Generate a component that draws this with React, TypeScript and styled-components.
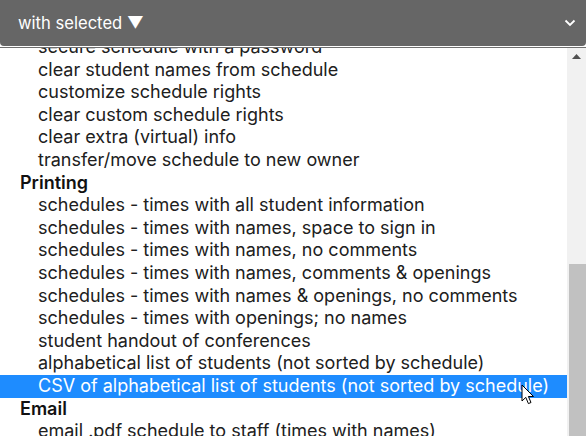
import React from "react";
import styled, { createGlobalStyle } from "styled-components";

const Global = createGlobalStyle`
  html, body { margin: 0; padding: 0; background: #ffffff; }
  body { font-family: Inter, "Noto Sans", sans-serif; overflow: hidden; }
  #root { width: 586px; height: 436px; overflow: hidden; }
`;

const Page = styled.div`
  width: 586px;
  height: 436px;
  display: flex;
  flex-direction: column;
  background: #fff;
  position: relative;
  overflow: hidden;
`;

const SelectBar = styled.div`
  height: 46px;
  flex: none;
  background: #666666;
  border-radius: 0 0 4px 4px;
  display: flex;
  align-items: center;
  justify-content: space-between;
  padding: 0 10px 0 18px;
  color: #ffffff;
  font-size: 16.6px;
  box-sizing: border-box;
`;

const BarLabel = styled.span`
  letter-spacing: 0;
`;

const Listbox = styled.div`
  margin-top: 1px;
  flex: 1;
  min-height: 0;
  border-top: 1px solid #6e6e6e;
  display: flex;
  overflow: hidden;
`;

const Options = styled.div`
  flex: 1;
  min-width: 0;
  overflow: hidden;
`;

const Scroller = styled.div`
  margin-top: -12px;
  display: flex;
  flex-direction: column;
`;

const Row = styled.div<{ $group?: boolean; $selected?: boolean }>`
  height: 22.6px;
  line-height: 22.6px;
  flex: none;
  font-size: 18px;
  white-space: nowrap;
  padding-left: ${(p) => (p.$group ? "20px" : "38px")};
  font-weight: ${(p) => (p.$group ? 600 : 400)};
  color: ${(p) => (p.$selected ? "#ffffff" : p.$group ? "#111111" : "#202020")};
  background: ${(p) => (p.$selected ? "#1e8cff" : "transparent")};
`;

const Scrollbar = styled.div`
  width: 19px;
  flex: none;
  background: #f1f1f1;
  display: flex;
  flex-direction: column;
`;

const ArrowBtn = styled.div`
  height: 17px;
  display: flex;
  align-items: center;
  justify-content: center;
  flex: none;
`;

const Track = styled.div`
  flex: 1;
  display: flex;
  flex-direction: column;
  padding: 0 0 0 2px;
`;

const TrackSpace = styled.div`
  height: 199px;
  flex: none;
`;

const Thumb = styled.div`
  flex: 1;
  background: #c1c1c1;
`;

const Cursor = styled.svg`
  position: absolute;
  left: 521px;
  top: 384px;
`;

type Item = { text: string; group?: boolean; selected?: boolean };

const items: Item[] = [
  { text: "secure schedule with a password" },
  { text: "clear student names from schedule" },
  { text: "customize schedule rights" },
  { text: "clear custom schedule rights" },
  { text: "clear extra (virtual) info" },
  { text: "transfer/move schedule to new owner" },
  { text: "Printing", group: true },
  { text: "schedules - times with all student information" },
  { text: "schedules - times with names, space to sign in" },
  { text: "schedules - times with names, no comments" },
  { text: "schedules - times with names, comments & openings" },
  { text: "schedules - times with names & openings, no comments" },
  { text: "schedules - times with openings; no names" },
  { text: "student handout of conferences" },
  { text: "alphabetical list of students (not sorted by schedule)" },
  { text: "CSV of alphabetical list of students (not sorted by schedule)", selected: true },
  { text: "Email", group: true },
  { text: "email .pdf schedule to staff (times with names)" },
];

export default function App() {
  return (
    <Page>
      <Global />
      <SelectBar>
        <BarLabel>with selected ▼</BarLabel>
        <svg width="12" height="8" viewBox="0 0 12 8">
          <path d="M1.5 1.5 L6 6 L10.5 1.5" fill="none" stroke="#ffffff" strokeWidth="1.8" />
        </svg>
      </SelectBar>
      <Listbox>
        <Options>
          <Scroller>
            {items.map((it, i) => (
              <Row key={i} $group={it.group} $selected={it.selected}>
                {it.text}
              </Row>
            ))}
          </Scroller>
        </Options>
        <Scrollbar>
          <ArrowBtn>
            <svg width="9" height="5" viewBox="0 0 9 5">
              <path d="M0 5 L4.5 0 L9 5 Z" fill="#505050" />
            </svg>
          </ArrowBtn>
          <Track>
            <TrackSpace />
            <Thumb />
          </Track>
        </Scrollbar>
      </Listbox>
      <Cursor width="14" height="22" viewBox="0 0 14 22">
        <path
          d="M1 1 L1 17 L4.8 13.4 L7.4 19.6 L10 18.5 L7.4 12.5 L12.5 12.5 Z"
          fill="#ffffff"
          stroke="#000000"
          strokeWidth="1"
          strokeLinejoin="round"
        />
      </Cursor>
    </Page>
  );
}
